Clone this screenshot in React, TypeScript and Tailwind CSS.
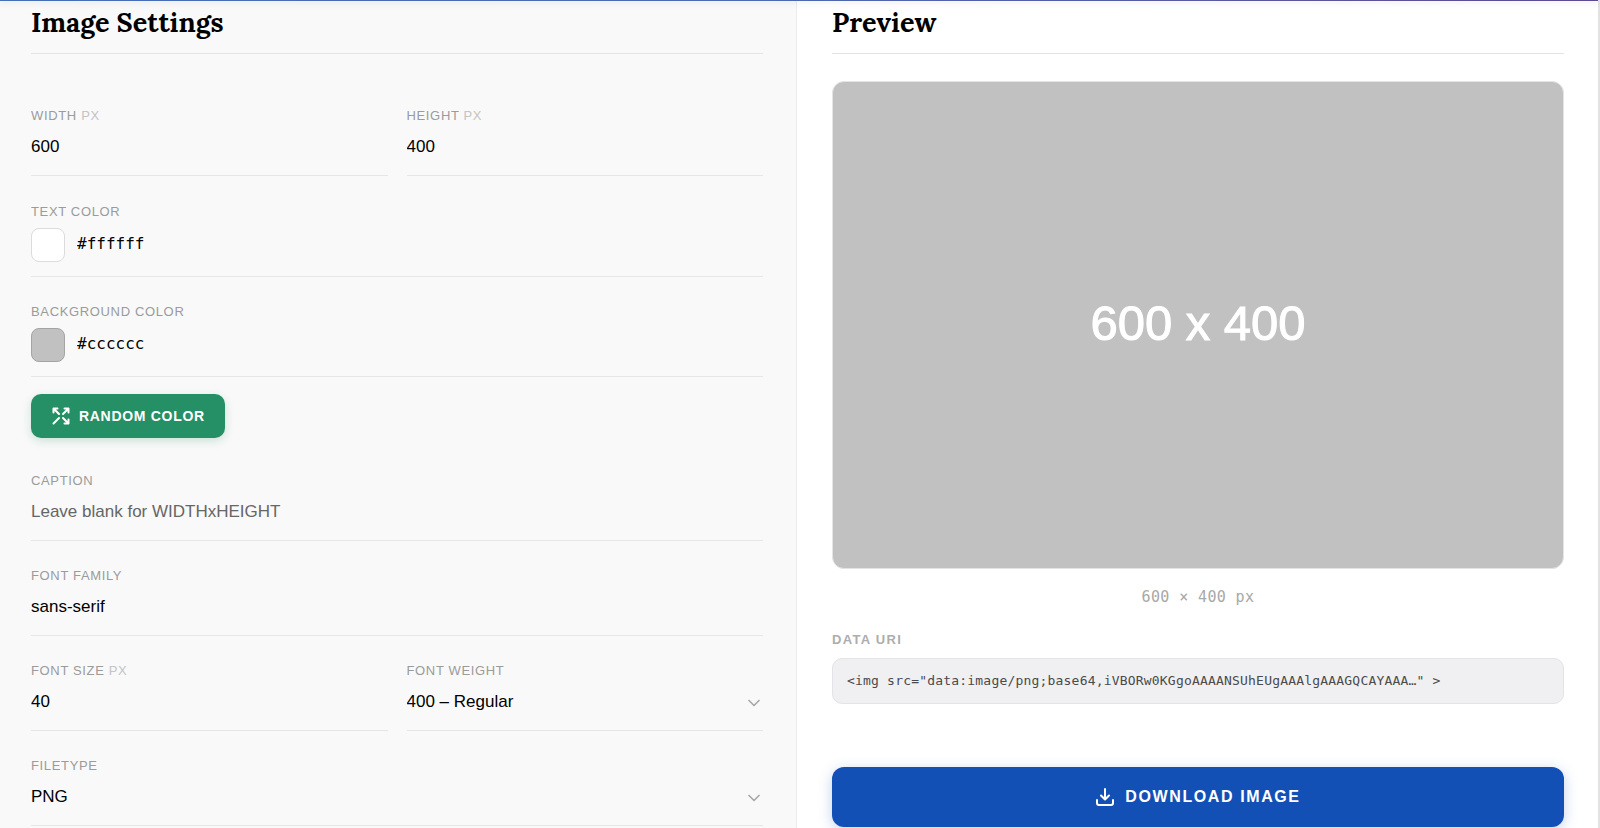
import React, { useState } from 'react';

const serif = "font-['Lora','Liberation_Serif',serif]";
const mono = "font-['DejaVu_Sans_Mono',monospace]";

interface FieldProps {
  id: string;
  label: string;
  unit?: string;
  children: React.ReactNode;
}

const Field: React.FC<FieldProps> = ({ id, label, unit, children }) => (
  <div className="border-b border-[#e6e6e6]">
    <label htmlFor={id} className="block text-[13px] leading-4 tracking-wider uppercase text-[#9b9b9b]">
      {label}
      {unit && <span className="text-[#c4c4c4]"> {unit}</span>}
    </label>
    {children}
  </div>
);

const inputClass =
  'block w-full h-[47px] mt-1 pb-[9px] bg-transparent text-[17px] text-black placeholder:text-[#666] outline-none appearance-none';

interface SelectFieldProps {
  id: string;
  label: string;
  options: string[];
}

const SelectField: React.FC<SelectFieldProps> = ({ id, label, options }) => (
  <Field id={id} label={label}>
    <div className="grid items-center">
      <select id={id} className={`${inputClass} col-start-1 row-start-1`}>
        {options.map((o) => (
          <option key={o}>{o}</option>
        ))}
      </select>
      <svg
        viewBox="0 0 12 8"
        className="col-start-1 row-start-1 justify-self-end w-3 h-2 mr-[3px] mb-1 pointer-events-none"
        fill="none"
        stroke="#aaa"
        strokeWidth="1.7"
        strokeLinecap="round"
        strokeLinejoin="round"
      >
        <path d="M1 1.5l5 5 5-5" />
      </svg>
    </div>
  </Field>
);

interface ColorFieldProps {
  id: string;
  label: string;
  value: string;
  fill: string;
  edge: string;
  onChange: (value: string) => void;
}

const ColorField: React.FC<ColorFieldProps> = ({ id, label, value, fill, edge, onChange }) => (
  <Field id={id} label={label}>
    <div className="flex items-center gap-3 h-[52px] mt-1 pb-[10px]">
      <button
        type="button"
        aria-label={`Pick ${label}`}
        className="size-[34px] shrink-0 rounded-lg border"
        style={{ backgroundColor: fill, borderColor: edge }}
      />
      <input
        id={id}
        value={value}
        onChange={(e) => onChange(e.target.value)}
        className={`flex-1 min-w-0 bg-transparent text-base text-black outline-none pb-0.5 ${mono}`}
      />
    </div>
  </Field>
);

const PanelTitle: React.FC<{ children: React.ReactNode }> = ({ children }) => (
  <h2 className={`h-[53px] pt-[3px] border-b border-[#e4e4e4] text-[27px] leading-9 font-bold text-black ${serif}`}>
    {children}
  </h2>
);

const App: React.FC = () => {
  const [width, setWidth] = useState('600');
  const [height, setHeight] = useState('400');
  const [textColor, setTextColor] = useState('#ffffff');
  const [bgColor, setBgColor] = useState('#cccccc');
  const [fontSize, setFontSize] = useState('40');
  const [fontFamily, setFontFamily] = useState('sans-serif');
  const [caption, setCaption] = useState('');

  const randomColor = () => {
    const n = Math.floor(Math.random() * 0xffffff);
    setBgColor(`#${n.toString(16).padStart(6, '0')}`);
  };

  // the default grey is shown slightly deeper than its nominal value
  const bgFill = bgColor === '#cccccc' ? '#c1c1c1' : bgColor;

  return (
    <div className="min-h-screen flex flex-col bg-white border-r-2 border-[#e2e2e2] font-['Helvetica_Neue','Liberation_Sans',Arial,sans-serif]">
      <div className="relative z-10 h-px bg-linear-to-r from-[#4470b8] via-[#4d68b0] to-[#5d4a92] shadow-[0_1px_6px_rgba(60,50,110,0.3)]" />

      <main className="flex-1 grid grid-cols-[797fr_801fr]">
        {/* Settings */}
        <section className="bg-[#f9f9f9] border-r border-[#ececec] pl-[31px] pr-[33px]">
          <PanelTitle>Image Settings</PanelTitle>

          <form className="pt-[54px]" onSubmit={(e) => e.preventDefault()}>
            <div className="grid grid-cols-2 gap-[19px]">
              <Field id="width" label="Width" unit="px">
                <input id="width" className={inputClass} value={width} onChange={(e) => setWidth(e.target.value)} />
              </Field>
              <Field id="height" label="Height" unit="px">
                <input id="height" className={inputClass} value={height} onChange={(e) => setHeight(e.target.value)} />
              </Field>
            </div>

            <div className="flex flex-col gap-[27px] mt-7">
              <ColorField
                id="text-color"
                label="Text Color"
                value={textColor}
                fill={textColor}
                edge="#dcdcdc"
                onChange={setTextColor}
              />
              <ColorField
                id="bg-color"
                label="Background Color"
                value={bgColor}
                fill={bgFill}
                edge="#a4a4a4"
                onChange={setBgColor}
              />
            </div>

            <button
              type="button"
              onClick={randomColor}
              className="flex items-center gap-2 h-11 mt-[17px] px-5 rounded-[10px] bg-[#259066] text-white text-sm font-bold tracking-wider uppercase shadow-[0_3px_10px_rgba(37,144,102,0.22)]"
            >
              <svg
                viewBox="0 0 20 20"
                className="size-5"
                fill="none"
                stroke="currentColor"
                strokeWidth="2"
                strokeLinecap="round"
                strokeLinejoin="round"
              >
                <path d="M8 8L2.5 2.5M2.5 6.5v-4h4M12 8l5.5-5.5M13.5 2.5h4v4M2.5 17.5L8 12M12 12l5.5 5.5M17.5 13.5v4h-4" />
              </svg>
              Random Color
            </button>

            <div className="flex flex-col gap-[27px] mt-[35px]">
              <Field id="caption" label="Caption">
                <input
                  id="caption"
                  className={inputClass}
                  placeholder="Leave blank for WIDTHxHEIGHT"
                  value={caption}
                  onChange={(e) => setCaption(e.target.value)}
                />
              </Field>
              <Field id="font-family" label="Font Family">
                <input
                  id="font-family"
                  className={inputClass}
                  value={fontFamily}
                  onChange={(e) => setFontFamily(e.target.value)}
                />
              </Field>
              <div className="grid grid-cols-2 gap-[19px]">
                <Field id="font-size" label="Font Size" unit="px">
                  <input
                    id="font-size"
                    className={inputClass}
                    value={fontSize}
                    onChange={(e) => setFontSize(e.target.value)}
                  />
                </Field>
                <SelectField id="font-weight" label="Font Weight" options={['400 – Regular', '700 – Bold']} />
              </div>
              <SelectField id="filetype" label="Filetype" options={['PNG', 'JPEG', 'WebP']} />
            </div>
          </form>
        </section>

        {/* Preview */}
        <section className="pl-[35px] pr-[34px]">
          <PanelTitle>Preview</PanelTitle>

          <div
            className="flex items-center justify-center aspect-[3/2] mt-[27px] pb-1 rounded-xl border border-[#e4e4e4] text-[49px] leading-none [-webkit-text-stroke:1px]"
            style={{ backgroundColor: bgFill, color: textColor }}
          >
            {caption || `${width} x ${height}`}
          </div>

          <p className={`mt-4 text-center text-[15px] leading-6 tracking-wide text-[#a8a8a8] ${mono}`}>
            {width} × {height} px
          </p>

          <h3 className="mt-[21px] text-[13px] leading-5 font-bold tracking-widest uppercase text-[#adadad]">
            Data URI
          </h3>
          <code
            className={`flex items-center h-[46px] mt-2 px-[14px] rounded-[10px] border border-[#e4e4e8] bg-[#f0f0f2] text-[13px] tracking-[0.015em] text-[#4a4a4a] whitespace-nowrap overflow-hidden ${mono}`}
          >
            {'<img src="data:image/png;base64,iVBORw0KGgoAAAANSUhEUgAAAlgAAAGQCAYAAA…" >'}
          </code>

          <button
            type="button"
            className="flex items-center justify-center gap-[10px] w-full h-[60px] mt-[63px] rounded-xl bg-[#1350b5] text-white text-base font-bold tracking-widest uppercase shadow-[0_3px_14px_rgba(19,80,181,0.25)]"
          >
            <svg
              viewBox="0 0 20 20"
              className="size-5"
              fill="none"
              stroke="currentColor"
              strokeWidth="2"
              strokeLinecap="round"
              strokeLinejoin="round"
            >
              <path d="M10 2v10M6 8.5l4 4 4-4M2 13v3a2 2 0 0 0 2 2h12a2 2 0 0 0 2-2v-3" />
            </svg>
            Download Image
          </button>
        </section>
      </main>
    </div>
  );
};

export default App;
